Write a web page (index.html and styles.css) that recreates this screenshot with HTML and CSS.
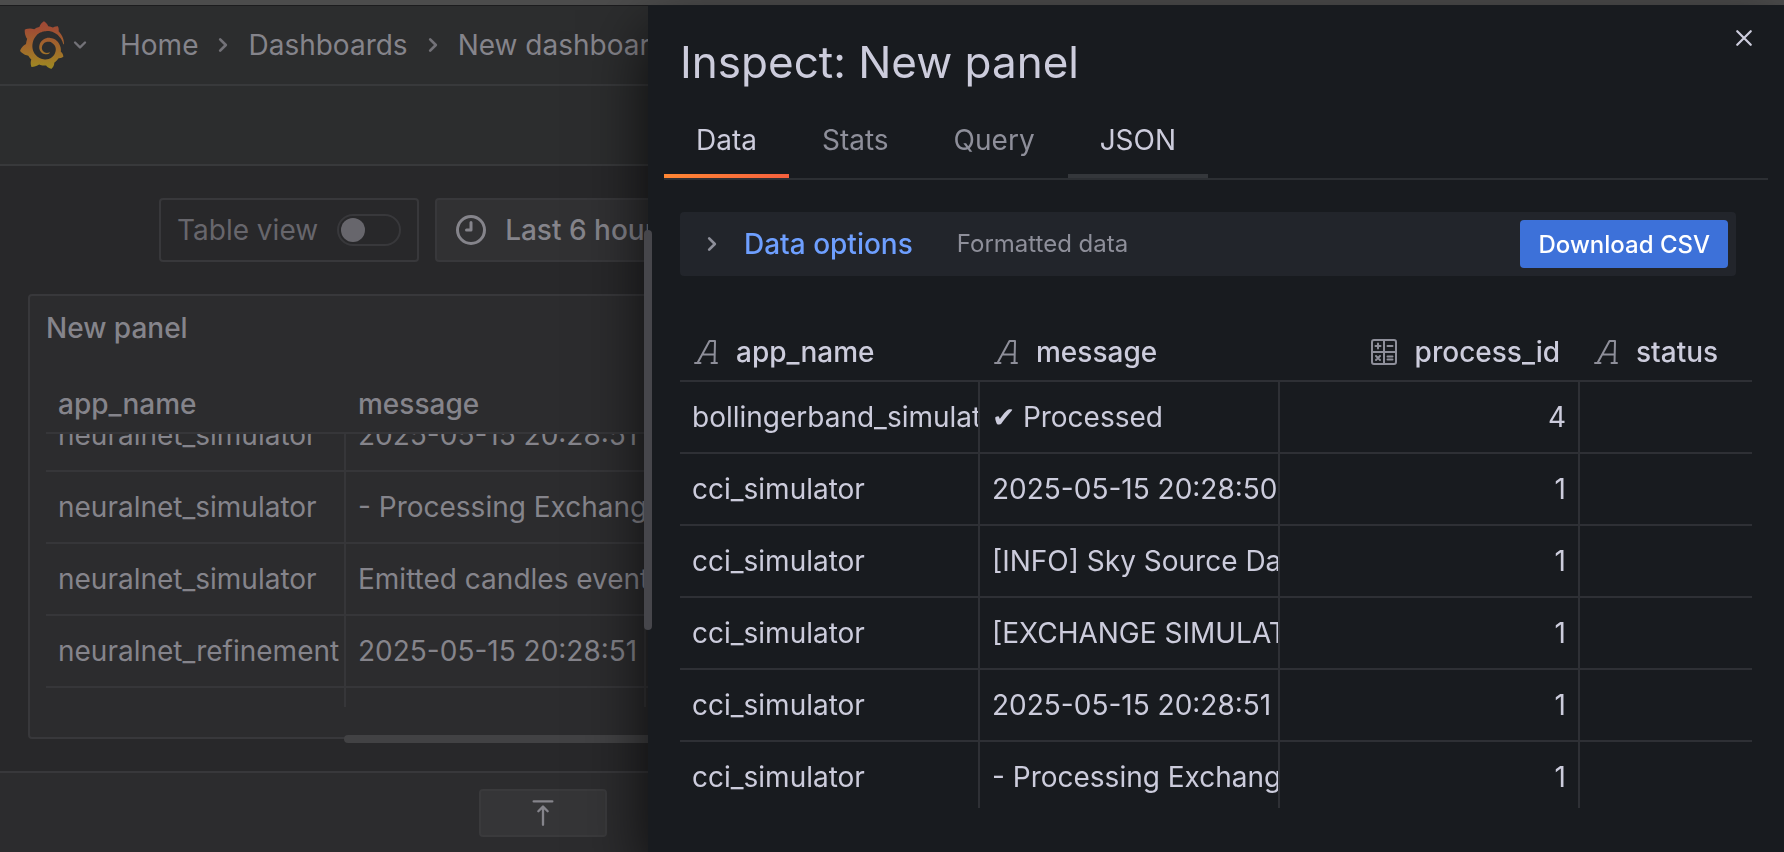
FILE: index.html
```html
<!DOCTYPE html>
<html lang="en">
<head>
<meta charset="utf-8">
<title>New dashboard - Grafana</title>
<link rel="stylesheet" href="styles.css">
</head>
<body>
<svg class="defs" aria-hidden="true">
  <symbol id="angle-down" viewBox="0 0 24 24"><path d="M17,9.17a1,1,0,0,0-1.41,0L12,12.71,8.46,9.17a1,1,0,0,0-1.41,0,1,1,0,0,0,0,1.42l4.24,4.24a1,1,0,0,0,1.42,0L17,10.59A1,1,0,0,0,17,9.17Z"/></symbol>
  <symbol id="angle-right" viewBox="0 0 24 24"><path d="M14.83,11.29,10.59,7.05a1,1,0,0,0-1.42,0,1,1,0,0,0,0,1.41L12.71,12,9.17,15.54a1,1,0,0,0,0,1.41,1,1,0,0,0,.71.29,1,1,0,0,0,.71-.29l4.24-4.24A1,1,0,0,0,14.83,11.29Z"/></symbol>
  <symbol id="type-string" viewBox="0 0 24 24"><path d="M1 23H6.500M17.500 23H23M3.500 23L15.500 1H21L20.500 23M9 14.500H20.500" fill="none" stroke="currentColor" stroke-width="2" stroke-linecap="round" stroke-linejoin="round"/></symbol>
  <symbol id="type-number" viewBox="0 0 26 26"><path d="M3 1H23A2 2 0 0 1 25 3V23A2 2 0 0 1 23 25H3A2 2 0 0 1 1 23V3A2 2 0 0 1 3 1ZM13 1V25M1 13H25M4.500 7H9.500M7 4.500V9.500M16.500 7H21.500M5 17L9 21M9 17L5 21M16.500 17.500H21.500M16.500 20.500H21.500" fill="none" stroke="currentColor" stroke-width="2" stroke-linecap="round"/></symbol>
</svg>

<div class="app">
  <header class="topbar">
    <button class="brand" type="button" aria-label="Open menu">
      <svg class="logo" viewBox="8 0 335 365" aria-hidden="true">
        <defs><linearGradient id="flame" x1="0" y1="1" x2="0" y2="0"><stop offset="0" stop-color="#9c8a22"/><stop offset="0.2" stop-color="#a17a26"/><stop offset="0.8" stop-color="#a04f33"/><stop offset="1" stop-color="#9e4836"/></linearGradient></defs>
        <path fill="url(#flame)" d="M342,161.2c-0.6-6.1-1.6-13.1-3.6-20.9c-2-7.7-5-16.2-9.4-25c-4.4-8.8-10.1-17.9-17.5-26.8c-2.9-3.5-6.1-6.9-9.5-10.2c5.1-20.3-6.2-37.9-6.2-37.9c-19.5-1.2-31.9,6.1-36.5,9.4c-0.8-0.3-1.5-0.7-2.3-1c-3.3-1.3-6.7-2.6-10.3-3.7c-3.5-1.1-7.1-2.1-10.8-3c-3.7-0.9-7.4-1.6-11.2-2.2c-0.7-0.1-1.3-0.2-2-0.3c-8.5-27.2-32.9-38.6-32.9-38.6c-27.3,17.3-32.4,41.5-32.4,41.5s-0.1,0.5-0.3,1.4c-1.5,0.4-3,0.9-4.5,1.3c-2.1,0.6-4.2,1.4-6.2,2.2c-2.1,0.8-4.1,1.6-6.2,2.5c-4.1,1.8-8.2,3.8-12.2,6c-3.9,2.2-7.7,4.6-11.4,7.1c-0.5-0.2-1-0.4-1-0.4c-37.8-14.4-71.3,2.9-71.3,2.9c-3.1,40.2,15.1,65.5,18.7,70.1c-0.9,2.5-1.7,5-2.5,7.5c-2.8,9.1-4.9,18.4-6.2,28.1c-0.2,1.4-0.4,2.8-0.5,4.2C18.8,192.7,8.5,228,8.5,228c29.1,33.5,63.1,35.6,63.1,35.6c0,0,0.1-0.1,0.1-0.1c4.3,7.7,9.3,15,14.9,21.9c2.4,2.9,4.8,5.6,7.4,8.3c-10.6,30.4,1.5,55.6,1.5,55.6c32.4,1.2,53.7-14.2,58.2-17.7c3.2,1.1,6.5,2.1,9.8,2.9c10,2.6,20.2,4.1,30.4,4.5c2.5,0.1,5.1,0.2,7.6,0.1l1.2,0l0.8,0l1.6,0l1.6-0.1l0,0.1c15.3,21.8,42.1,24.9,42.1,24.9c19.1-20.1,20.2-40.1,20.2-44.4l0,0c0,0,0-0.1,0-0.3c0-0.4,0-0.6,0-0.6l0,0c0-0.3,0-0.6,0-0.9c4-2.8,7.8-5.8,11.4-9.1c7.6-6.9,14.3-14.8,19.9-23.3c0.5-0.8,1-1.6,1.5-2.4c21.6,1.2,36.9-13.4,36.9-13.4c-3.6-22.5-16.4-33.5-19.1-35.6l0,0c0,0-0.1-0.1-0.3-0.2c-0.2-0.1-0.2-0.2-0.2-0.2c0,0,0,0,0,0c-0.1-0.1-0.3-0.2-0.5-0.3c0.1-1.4,0.2-2.7,0.3-4.1c0.2-2.4,0.2-4.9,0.2-7.3l0-1.8l0-0.9l0-0.5c0-0.6,0-0.4,0-0.6l-0.1-1.5l-0.1-2c0-0.7-0.1-1.3-0.2-1.9c-0.1-0.6-0.1-1.3-0.2-1.9l-0.2-1.9l-0.3-1.9c-0.4-2.5-0.8-4.9-1.4-7.4c-2.3-9.7-6.1-18.9-11-27.2c-5-8.3-11.2-15.6-18.3-21.8c-7-6.2-14.9-11.2-23.1-14.9c-8.3-3.7-16.9-6.1-25.5-7.2c-4.3-0.6-8.6-0.8-12.9-0.7l-1.6,0l-0.4,0c-0.1,0-0.6,0-0.5,0l-0.7,0l-1.6,0.1c-0.6,0-1.2,0.1-1.7,0.1c-2.2,0.2-4.4,0.5-6.5,0.9c-8.6,1.6-16.7,4.7-23.8,9c-7.1,4.3-13.3,9.6-18.3,15.6c-5,6-8.9,12.7-11.6,19.6c-2.7,6.9-4.2,14.1-4.6,21c-0.1,1.7-0.1,3.5-0.1,5.2c0,0.4,0,0.9,0,1.3l0.1,1.4c0.1,0.8,0.1,1.7,0.2,2.5c0.3,3.5,1,6.9,1.9,10.1c1.9,6.5,4.9,12.4,8.6,17.4c3.7,5,8.2,9.1,12.9,12.4c4.7,3.2,9.8,5.5,14.8,7c5,1.5,10,2.1,14.7,2.1c0.6,0,1.2,0,1.7,0c0.3,0,0.6,0,0.9,0c0.3,0,0.6,0,0.9-0.1c0.5,0,1-0.1,1.5-0.1c0.1,0,0.3,0,0.4-0.1l0.5-0.1c0.3,0,0.6-0.1,0.9-0.1c0.6-0.1,1.1-0.2,1.7-0.3c0.6-0.1,1.1-0.2,1.6-0.4c1.1-0.2,2.1-0.6,3.1-0.9c2-0.7,4-1.5,5.7-2.4c1.8-0.9,3.4-2,5-3c0.4-0.3,0.9-0.6,1.3-1c1.6-1.3,1.9-3.7,0.6-5.3c-1.1-1.4-3.1-1.8-4.7-0.9c-0.4,0.2-0.8,0.4-1.2,0.6c-1.4,0.7-2.8,1.3-4.3,1.8c-1.5,0.5-3.1,0.9-4.7,1.2c-0.8,0.1-1.6,0.2-2.5,0.3c-0.4,0-0.8,0.1-1.3,0.1c-0.4,0-0.9,0-1.2,0c-0.4,0-0.8,0-1.2,0c-0.5,0-1,0-1.5-0.1c0,0-0.3,0-0.1,0l-0.2,0l-0.3,0c-0.2,0-0.5,0-0.7-0.1c-0.5-0.1-0.9-0.1-1.4-0.2c-3.7-0.5-7.4-1.6-10.9-3.2c-3.6-1.6-7-3.8-10.1-6.6c-3.1-2.8-5.8-6.1-7.9-9.9c-2.1-3.8-3.6-8-4.3-12.4c-0.3-2.2-0.5-4.5-0.4-6.7c0-0.6,0.1-1.2,0.1-1.8c0,0.2,0-0.1,0-0.1l0-0.2l0-0.5c0-0.3,0.1-0.6,0.1-0.9c0.1-1.2,0.3-2.4,0.5-3.6c1.7-9.6,6.5-19,13.9-26.1c1.9-1.8,3.9-3.4,6-4.9c2.1-1.5,4.4-2.8,6.8-3.9c2.4-1.1,4.8-2,7.4-2.7c2.5-0.7,5.1-1.1,7.8-1.4c1.3-0.1,2.6-0.2,4-0.2c0.4,0,0.6,0,0.9,0l1.1,0l0.7,0c0.3,0,0,0,0.1,0l0.3,0l1.1,0.1c2.9,0.2,5.7,0.6,8.5,1.3c5.6,1.2,11.1,3.3,16.2,6.1c10.2,5.7,18.9,14.5,24.2,25.1c2.7,5.3,4.6,11,5.5,16.9c0.2,1.5,0.4,3,0.5,4.5l0.1,1.1l0.1,1.1c0,0.4,0,0.8,0,1.1c0,0.4,0,0.8,0,1.1l0,1l0,1.1c0,0.7-0.1,1.9-0.1,2.6c-0.1,1.6-0.3,3.3-0.5,4.9c-0.2,1.6-0.5,3.2-0.8,4.8c-0.3,1.6-0.7,3.2-1.1,4.7c-0.8,3.1-1.8,6.2-3,9.3c-2.4,6-5.6,11.8-9.4,17.1c-7.7,10.6-18.2,19.2-30.2,24.7c-6,2.7-12.3,4.7-18.8,5.7c-3.2,0.6-6.5,0.9-9.8,1l-0.6,0l-0.5,0l-1.1,0l-1.6,0l-0.8,0c0.4,0-0.1,0-0.1,0l-0.3,0c-1.8,0-3.5-0.1-5.3-0.3c-7-0.5-13.9-1.8-20.7-3.7c-6.7-1.9-13.2-4.6-19.4-7.8c-12.3-6.6-23.4-15.6-32-26.5c-4.3-5.4-8.1-11.3-11.2-17.4c-3.1-6.1-5.6-12.6-7.4-19.1c-1.8-6.6-2.9-13.3-3.4-20.1l-0.1-1.3l0-0.3l0-0.3l0-0.6l0-1.1l0-0.3l0-0.4l0-0.8l0-1.6l0-0.3c0,0,0,0.1,0-0.1l0-0.6c0-0.8,0-1.7,0-2.5c0.1-3.3,0.4-6.8,0.8-10.2c0.4-3.4,1-6.9,1.7-10.3c0.7-3.4,1.5-6.8,2.5-10.2c1.9-6.7,4.3-13.2,7.1-19.3c5.7-12.2,13.1-23.1,22-31.8c2.2-2.2,4.5-4.2,6.9-6.2c2.4-1.9,4.9-3.7,7.5-5.4c2.5-1.7,5.2-3.2,7.9-4.6c1.3-0.7,2.7-1.4,4.1-2c0.7-0.3,1.4-0.6,2.1-0.9c0.7-0.3,1.4-0.6,2.1-0.9c2.8-1.2,5.7-2.2,8.7-3.1c0.7-0.2,1.5-0.4,2.2-0.7c0.7-0.2,1.5-0.4,2.2-0.6c1.5-0.4,3-0.8,4.5-1.1c0.7-0.2,1.5-0.3,2.3-0.5c0.8-0.2,1.5-0.3,2.3-0.5c0.8-0.1,1.5-0.3,2.3-0.4l1.1-0.2l1.2-0.2c0.8-0.1,1.5-0.2,2.3-0.3c0.9-0.1,1.7-0.2,2.6-0.3c0.7-0.1,1.9-0.2,2.6-0.3c0.5-0.1,1.1-0.1,1.6-0.2l1.1-0.1l0.5-0.1l0.6,0c0.9-0.1,1.7-0.1,2.6-0.2l1.3-0.1c0,0,0.5,0,0.1,0l0.3,0l0.6,0c0.7,0,1.5-0.1,2.2-0.1c2.9-0.1,5.9-0.1,8.8,0c5.8,0.2,11.5,0.9,17,1.9c11.1,2.1,21.5,5.6,31,10.3c9.5,4.6,17.9,10.3,25.3,16.5c0.5,0.4,0.9,0.8,1.4,1.2c0.4,0.4,0.9,0.8,1.3,1.2c0.9,0.8,1.7,1.6,2.6,2.4c0.9,0.8,1.7,1.6,2.5,2.4c0.8,0.8,1.6,1.6,2.4,2.5c3.1,3.3,6,6.6,8.6,10c5.2,6.7,9.4,13.5,12.7,19.9c0.2,0.4,0.4,0.8,0.6,1.2c0.2,0.4,0.4,0.8,0.6,1.2c0.4,0.8,0.8,1.6,1.1,2.4c0.4,0.8,0.7,1.5,1.1,2.3c0.3,0.8,0.7,1.5,1,2.3c1.2,3,2.4,5.9,3.3,8.6c1.5,4.4,2.6,8.3,3.5,11.7c0.3,1.4,1.6,2.3,3,2.1c1.5-0.1,2.6-1.3,2.6-2.8C342.6,170.4,342.5,166.1,342,161.2z"/>
      </svg>
      <svg class="icon icon-caret"><use href="#angle-down"/></svg>
    </button>
    <nav class="crumbs" aria-label="Breadcrumbs">
      <a href="#">Home</a>
      <svg class="icon"><use href="#angle-right"/></svg>
      <a href="#">Dashboards</a>
      <svg class="icon"><use href="#angle-right"/></svg>
      <a href="#">New dashboard</a>
    </nav>
  </header>
  <div class="toolbar"></div>

  <main class="editor">
    <div class="controls">
      <label class="table-view" for="table-view">Table view
        <input class="switch" id="table-view" type="checkbox" role="switch">
      </label>
      <button class="time-range" type="button">
        <svg class="icon-clock" viewBox="0 0 24 24"><path d="M12,2A10,10,0,1,0,22,12,10,10,0,0,0,12,2Zm0,18a8,8,0,1,1,8-8A8,8,0,0,1,12,20ZM12,6a1,1,0,0,0-1,1v4H9a1,1,0,0,0,0,2h3a1,1,0,0,0,1-1V7A1,1,0,0,0,12,6Z"/></svg>
        Last 6 hours
      </button>
    </div>
    <section class="panel">
      <h2 class="panel-title">New panel</h2>
      <table class="grid panel-grid">
        <thead>
          <tr><th>app_name</th><th>message</th><th></th></tr>
        </thead>
        <tbody>
          <tr><td>neuralnet_simulator</td><td>2025-05-15 20:28:51</td><td></td></tr>
          <tr><td>neuralnet_simulator</td><td>- Processing Exchange</td><td></td></tr>
          <tr><td>neuralnet_simulator</td><td>Emitted candles event</td><td></td></tr>
          <tr><td>neuralnet_refinement</td><td>2025-05-15 20:28:51</td><td></td></tr>
          <tr><td></td><td></td><td></td></tr>
        </tbody>
      </table>
      <div class="scroll-x"></div>
    </section>
  </main>
  <footer class="bottom">
    <button class="expand" type="button" aria-label="Expand options">
      <svg class="icon-top" viewBox="0 0 24 24"><path d="M4 2H20M12 22V7M8 10.500L12 6.500L16 10.500" fill="none" stroke="currentColor" stroke-width="2" stroke-linecap="round" stroke-linejoin="round"/></svg>
    </button>
  </footer>
</div>

<aside class="drawer" role="dialog" aria-labelledby="drawer-title">
  <div class="resize-handle"></div>
  <button class="close" type="button" aria-label="Close">
    <svg class="icon-close" viewBox="0 0 16 16"><path d="M2 2L14 14M14 2L2 14" fill="none" stroke="currentColor" stroke-width="2" stroke-linecap="round"/></svg>
  </button>
  <h1 class="drawer-title" id="drawer-title">Inspect: New panel</h1>
  <div class="tabs" role="tablist">
    <button class="tab tab-active" type="button" role="tab" aria-selected="true">Data</button>
    <button class="tab" type="button" role="tab">Stats</button>
    <button class="tab" type="button" role="tab">Query</button>
    <button class="tab tab-hover" type="button" role="tab">JSON</button>
  </div>
  <div class="drawer-body">
    <div class="options">
      <svg class="icon"><use href="#angle-right"/></svg>
      <button class="options-title" type="button">Data options</button>
      <span class="options-info">Formatted data</span>
      <button class="download" type="button">Download CSV</button>
    </div>
    <table class="grid data-grid">
      <thead>
        <tr>
          <th><svg class="icon-type"><use href="#type-string"/></svg>app_name</th>
          <th><svg class="icon-type"><use href="#type-string"/></svg>message</th>
          <th class="num"><svg class="icon-number"><use href="#type-number"/></svg>process_id</th>
          <th><svg class="icon-type"><use href="#type-string"/></svg>status</th>
        </tr>
      </thead>
      <tbody>
        <tr><td>bollingerband_simulator</td><td>✔ Processed</td><td class="num">4</td><td></td></tr>
        <tr><td>cci_simulator</td><td>2025-05-15 20:28:50</td><td class="num">1</td><td></td></tr>
        <tr><td>cci_simulator</td><td>[INFO] Sky Source Data</td><td class="num">1</td><td></td></tr>
        <tr><td>cci_simulator</td><td>[EXCHANGE SIMULATOR]</td><td class="num">1</td><td></td></tr>
        <tr><td>cci_simulator</td><td>2025-05-15 20:28:51</td><td class="num">1</td><td></td></tr>
        <tr><td>cci_simulator</td><td>- Processing Exchange</td><td class="num">1</td><td></td></tr>
      </tbody>
    </table>
  </div>
</aside>
</body>
</html>
```

FILE: styles.css
```css
* {
  box-sizing: border-box;
}

body {
  margin: 0;
  height: 100vh;
  overflow: hidden;
  background: #28282a;
  color: #85848b;
  font-family: Inter, "Liberation Sans", sans-serif;
  font-size: 28px;
  line-height: 44px;
}

button {
  margin: 0;
  padding: 0;
  border: 0;
  background: none;
  color: inherit;
  font: inherit;
}

a {
  color: inherit;
  text-decoration: none;
}

svg {
  display: block;
  flex: none;
  fill: currentColor;
}

.defs {
  position: absolute;
  width: 0;
  height: 0;
}

.icon {
  width: 32px;
  height: 32px;
}

/* Page behind the drawer */

.app {
  display: flex;
  flex-direction: column;
  height: 100vh;
  border-top: 5px solid #4c4c4c;
}

.topbar {
  display: flex;
  align-items: center;
  gap: 26px;
  height: 81px;
  padding-left: 20px;
  border-top: 1px solid #1c1c1e;
  border-bottom: 2px solid #38393b;
  background: #2c2d2e;
}

.brand {
  display: flex;
  align-items: center;
  gap: 2px;
}

.logo {
  width: 44px;
  height: 48px;
}

.icon-caret {
  width: 28px;
  height: 28px;
  color: #737278;
}

.crumbs {
  display: flex;
  align-items: center;
  gap: 9px;
  white-space: nowrap;
}

.crumbs .icon {
  color: #737278;
}

.toolbar {
  height: 80px;
  flex: none;
  border-bottom: 2px solid #38393b;
  background: #2c2d2e;
}

.editor {
  display: flex;
  flex: 1;
  flex-direction: column;
  gap: 32px;
  min-height: 0;
  padding: 32px 28px;
}

.controls {
  display: flex;
  gap: 16px;
  margin-left: 131px;
}

.table-view,
.time-range {
  display: flex;
  align-items: center;
  height: 64px;
  border: 2px solid #38383b;
  border-radius: 4px;
  white-space: nowrap;
}

.table-view {
  gap: 19px;
  padding: 0 16px;
  color: #67666c;
}

.switch {
  display: flex;
  align-items: center;
  appearance: none;
  width: 64px;
  height: 32px;
  margin: 0;
  padding: 2px;
  border: 2px solid #38383b;
  border-radius: 16px;
}

.switch::before {
  content: "";
  width: 24px;
  height: 24px;
  border-radius: 50%;
  background: #67666c;
}

.time-range {
  gap: 16px;
  padding: 0 16px;
  background: #313133;
  font-weight: 500;
}

.icon-clock {
  width: 36px;
  height: 36px;
}

.panel {
  position: relative;
  display: flex;
  flex: 1;
  flex-direction: column;
  min-height: 0;
  padding: 0 16px 30px;
  border: 2px solid #38383b;
  border-radius: 4px;
  background: #2c2c2e;
}

.panel-title {
  margin: 0;
  padding: 10px 0;
  font-size: 28px;
  font-weight: 500;
}

.scroll-x {
  position: absolute;
  right: 0;
  bottom: -6px;
  left: 314px;
  height: 8px;
  border-radius: 4px;
  background: #424244;
}

.bottom {
  flex: none;
  height: 81px;
  padding: 16px 479px;
  border-top: 2px solid #38383b;
  background: #2c2c2e;
}

.expand {
  display: flex;
  align-items: center;
  justify-content: center;
  width: 128px;
  height: 48px;
  border: 2px solid #3a3a3c;
  border-radius: 4px;
  background: #353537;
}

.icon-top {
  width: 28px;
  height: 28px;
}

/* Tables */

.grid {
  display: flex;
  flex-direction: column;
  overflow: hidden;
}

.grid thead,
.grid tbody {
  display: block;
}

.grid thead {
  flex: none;
}

.grid tbody {
  flex: 1;
  min-height: 0;
  overflow: hidden;
}

.grid tr {
  display: flex;
  height: 72px;
  border-bottom: 2px solid var(--line);
}

.grid th,
.grid td {
  flex: none;
  width: 300px;
  overflow: hidden;
  white-space: nowrap;
}

.grid th {
  display: flex;
  align-items: center;
  padding: 0 12px;
  font-weight: 500;
  text-align: left;
}

.grid td {
  padding: 13px 0 13px 12px;
  border-right: 2px solid var(--line);
}

.grid th:last-child,
.grid td:last-child {
  flex: 1;
  border-right: 0;
}

.grid thead tr {
  height: 74px;
  padding-top: 16px;
}

.panel-grid {
  --line: #363639;
  flex: 1;
  min-height: 0;
}

/* The list is scrolled part way into its first row */
.panel-grid tbody tr:first-child {
  margin-top: -34px;
}

/* Drawer */

.drawer {
  position: fixed;
  top: 5px;
  right: 0;
  bottom: 0;
  left: 648px;
  display: flex;
  flex-direction: column;
  background: #181b1f;
  box-shadow: 0 26px 60px rgba(0, 0, 0, 0.75);
  color: #ccccdc;
}

.resize-handle {
  position: absolute;
  top: 225px;
  left: -4px;
  width: 8px;
  height: 400px;
  border-radius: 4px;
  background: #46464b;
}

.close {
  position: absolute;
  top: 17px;
  right: 24px;
  display: flex;
  align-items: center;
  justify-content: center;
  width: 32px;
  height: 32px;
}

.icon-close {
  width: 18px;
  height: 18px;
}

.drawer-title {
  margin: 0;
  padding: 30px 32px 19px;
  font-size: 44px;
  font-weight: 400;
  line-height: 54px;
}

.tabs {
  display: flex;
  gap: 1px;
  margin: 0 16px;
  border-bottom: 2px solid #2c2f33;
}

.tab {
  height: 70px;
  padding: 0 32px 2px;
  border-bottom: 4px solid transparent;
  color: #8e8f9a;
}

.tab-active {
  border-image: linear-gradient(90deg, #ff8833, #f55f3e) 4;
  border-width: 0 0 4px;
  color: #ccccdc;
}

.tab-hover {
  border-bottom-color: #34373b;
  color: #ccccdc;
}

.drawer-body {
  display: flex;
  flex: 1;
  flex-direction: column;
  gap: 32px;
  min-height: 0;
  padding: 32px 32px 44px;
}

.options {
  display: flex;
  align-items: center;
  height: 64px;
  margin-right: 16px;
  padding: 0 8px 0 16px;
  border-radius: 4px;
  background: #22252b;
  color: #8e8f9a;
}

.options-title {
  margin: 0 44px 0 16px;
  color: #6e9fff;
  font-weight: 500;
}

.options-info {
  font-size: 24px;
}

.download {
  height: 48px;
  margin-left: auto;
  padding: 2px 18px 0;
  border-radius: 4px;
  background: #3d71d9;
  color: #ffffff;
  font-size: 24px;
  font-weight: 500;
}

.data-grid {
  --line: #2e3035;
  flex: 1;
  min-height: 0;
}

.data-grid .num {
  justify-content: flex-end;
  padding-right: 12px;
  text-align: right;
}

.data-grid th.num {
  padding-right: 20px;
}

.icon-type {
  width: 24px;
  height: 24px;
  margin: 0 18px 0 2px;
  color: #8e8f9a;
}

.icon-number {
  width: 26px;
  height: 26px;
  margin-right: 18px;
  color: #8e8f9a;
}
```
